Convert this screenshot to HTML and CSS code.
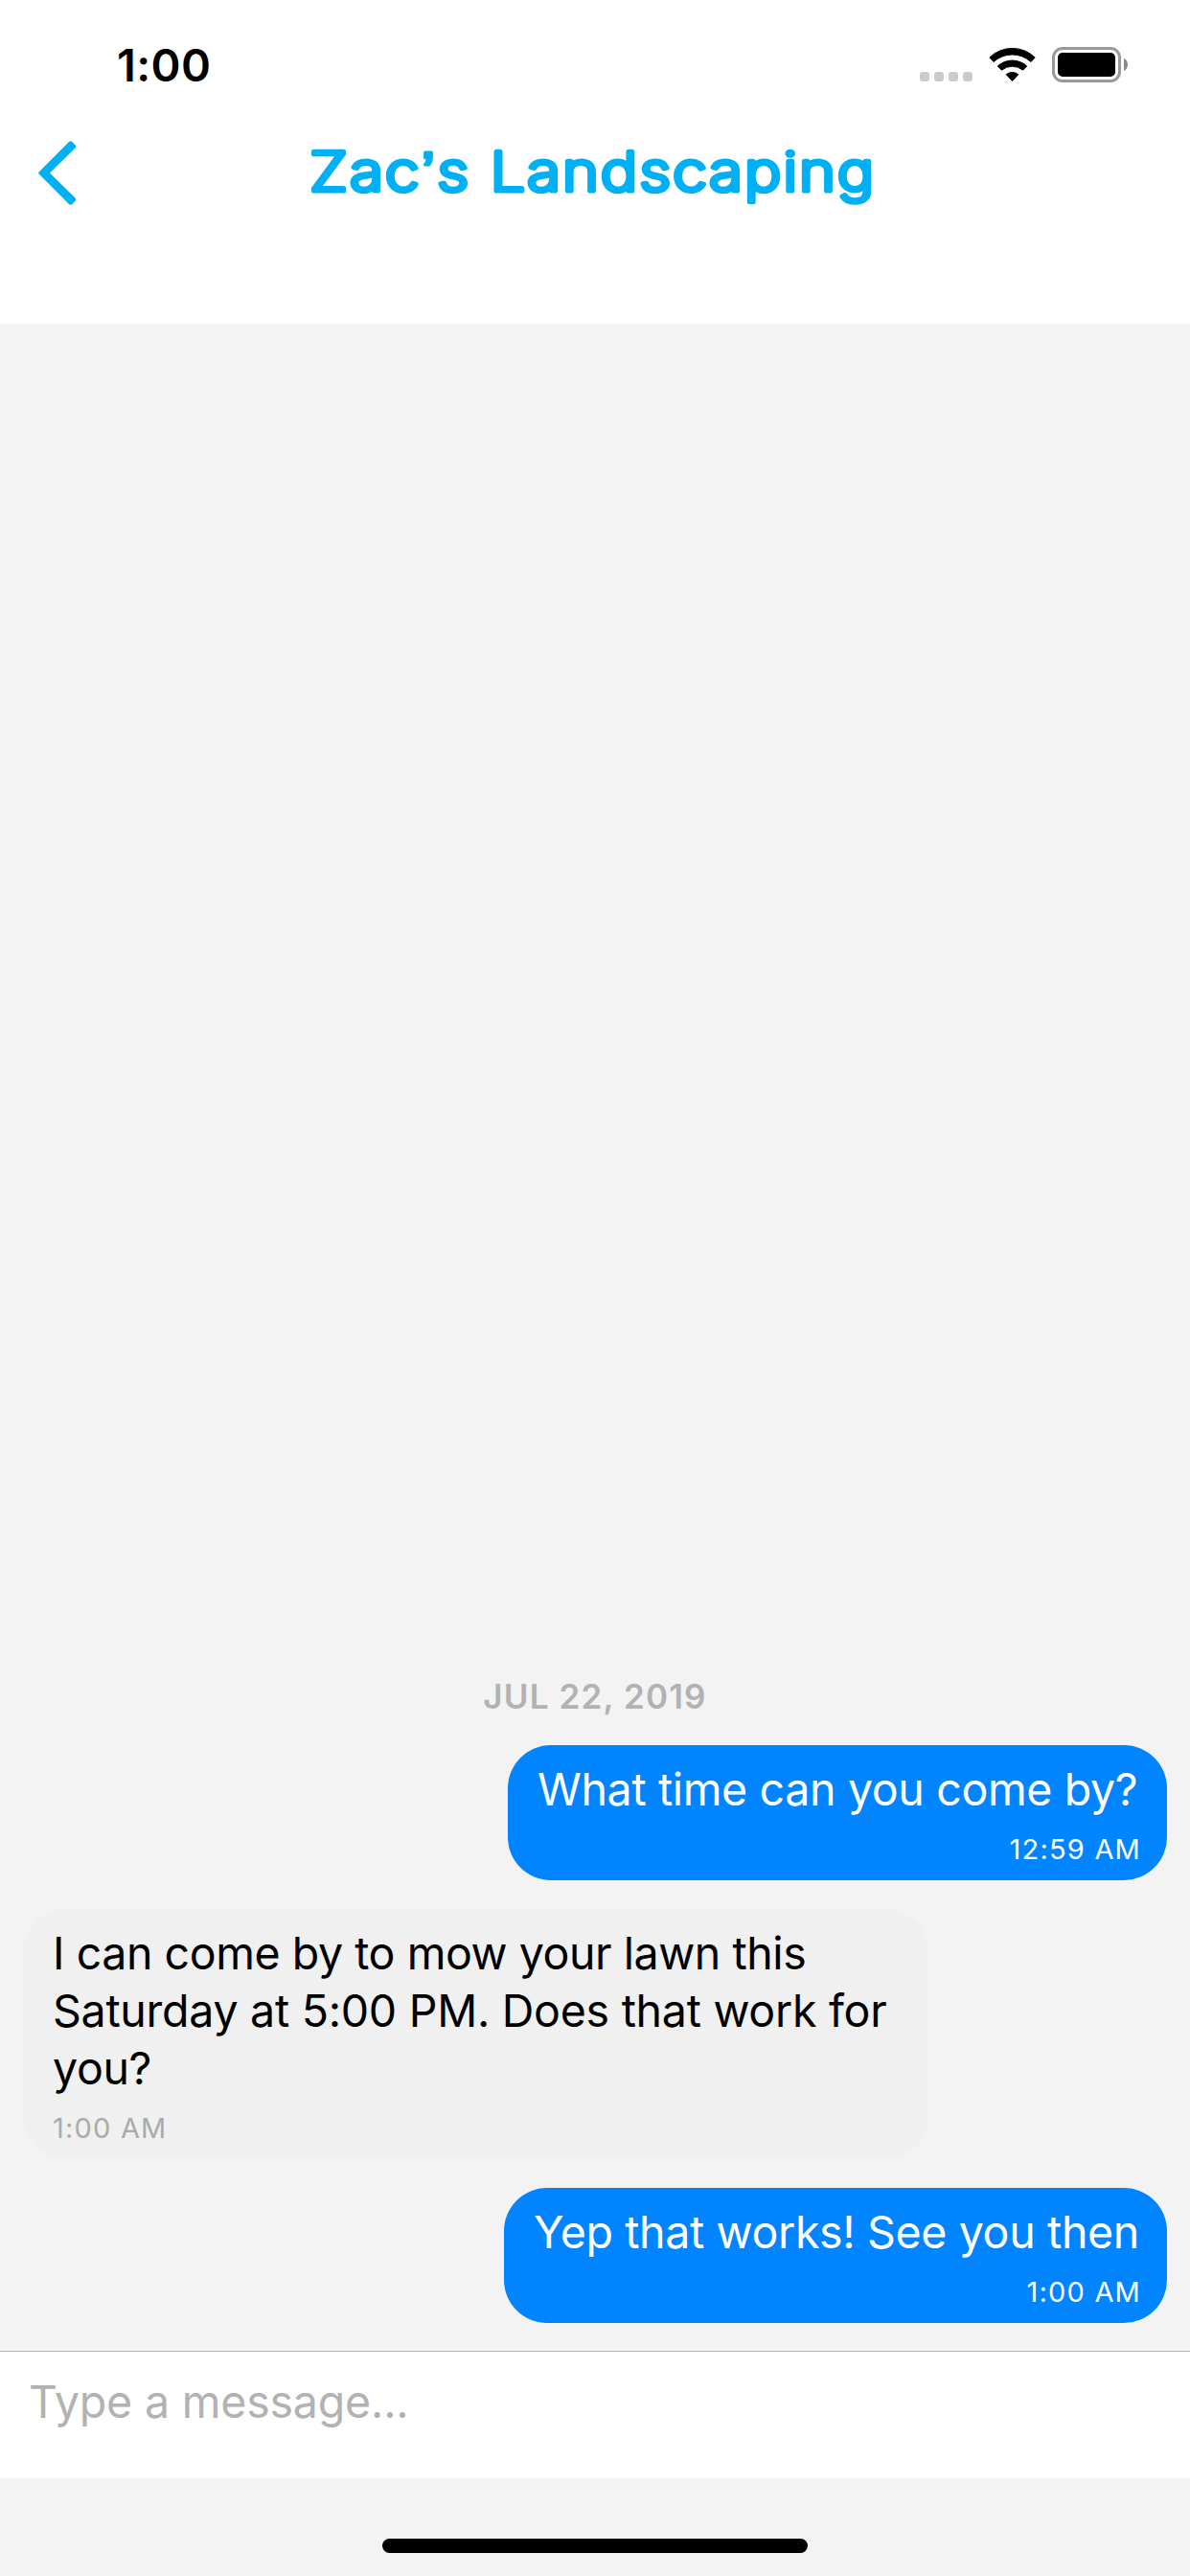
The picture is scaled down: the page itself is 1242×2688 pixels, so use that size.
FILE: index.html
```html
<!DOCTYPE html>
<html lang="en">
<head>
<meta charset="utf-8">
<title>Zac’s Landscaping</title>
<link rel="stylesheet" href="styles.css">
</head>
<body>
<div class="screen">
  <header class="header">
    <div class="status">
      <span class="clock">1:00</span>
      <svg class="status-icons" width="220" height="40" viewBox="958 47 220 40" aria-hidden="true">
        <g fill="#cbcbcb">
          <rect x="960" y="75" width="10" height="10" rx="3"/>
          <rect x="975" y="75" width="10" height="10" rx="3"/>
          <rect x="990" y="75" width="10" height="10" rx="3"/>
          <rect x="1005" y="75" width="10" height="10" rx="3"/>
        </g>
        <g stroke="#000" stroke-width="1" stroke-linejoin="round">
          <path d="M1032.8 60A34 34 0 0 1 1080.2 60L1076 64.5A29 29 0 0 0 1037 64.5Z"/>
          <path d="M1041.3 69A22.5 22.5 0 0 1 1071.7 69L1067.6 73.2A17.5 17.5 0 0 0 1045.4 73.2Z"/>
          <path d="M1050.2 77.7A10 10 0 0 1 1062.8 77.7L1056.5 84.4Z"/>
        </g>
        <rect x="1099.5" y="50.5" width="69" height="34" rx="9.5" fill="none" stroke="#999" stroke-width="3"/>
        <rect x="1104" y="55" width="60" height="25" rx="5"/>
        <path d="M1173 60.7C1178.300 63 1178.300 71.700 1173 74Z" fill="#8a8a8a"/>
      </svg>
    </div>
    <div class="nav">
      <svg class="back" width="40" height="68" viewBox="40 147 40 68" aria-label="Back">
        <path fill="#00b0f4" d="M40.600 179.500L72 148.100Q73.700 146.600 75.300 148.100L78.500 151.200Q80 152.900 78.500 154.500L52 180.500L78.500 206.500Q80 208.100 78.500 209.800L75.300 212.900Q73.700 214.400 72 212.900L40.600 181.500Q39.700 180.500 40.600 179.500Z"/>
      </svg>
      <svg class="title" width="640" height="90" viewBox="0 0 640 90" role="heading" aria-level="1">
        <text transform="translate(3.300 56) scale(1.15 1)">Zac<tspan class="mark">’</tspan>s Landscaping</text>
      </svg>
    </div>
  </header>

  <main class="chat">
    <div class="date">JUL 22, 2019</div>
    <div class="bubble sent question">
      <p class="text">What time can you come by?</p>
      <div class="time">12:59 AM</div>
    </div>
    <div class="bubble received">
      <p class="text"><span class="tight">I can come by to mow your lawn this</span> <span class="loose">Saturday at 5:00 PM. Does that work for</span> you?</p>
      <div class="time">1:00 AM</div>
    </div>
    <div class="bubble sent answer">
      <p class="text">Yep that works! See you then</p>
      <div class="time">1:00 AM</div>
    </div>
  </main>

  <div class="composer">Type a message...</div>
  <footer class="home"><div class="home-bar"></div></footer>
</div>
</body>
</html>
```
FILE: styles.css
```css
* { box-sizing: border-box; }

body {
  margin: 0;
  background: #f3f3f3;
  color: #000;
  font-family: Inter, "Liberation Sans", sans-serif;
}

.screen {
  display: flex;
  flex-direction: column;
  width: 1242px;
  height: 2688px;
  overflow: hidden;
}

.header {
  flex: none;
  height: 338px;
  background: #fff;
}

.status {
  display: flex;
  justify-content: space-between;
  align-items: flex-start;
  height: 143px;
  padding: 38px 64px 0 122px;
}

.clock {
  font-size: 47px;
  font-weight: 600;
  line-height: 60px;
  letter-spacing: 0.38px;
}

.status-icons { margin-top: 9px; }

.nav {
  display: flex;
  align-items: flex-start;
  padding-left: 40px;
}

.back { margin-top: 4px; }

.title { margin-left: 240px; }

/* A thin face with a wide round-joined stroke gives rounded letter ends */
.title text {
  font: 200 56px Inter, sans-serif;
  letter-spacing: 1.95px;
  text-rendering: geometricPrecision;
  fill: #00b0f4;
  stroke: #00b0f4;
  stroke-width: 5.2px;
  stroke-linejoin: round;
}

.title .mark {
  font: 400 58px "Liberation Sans", sans-serif;
  stroke-width: 3px;
}

.chat {
  flex: 1;
  display: flex;
  flex-direction: column;
  justify-content: flex-end;
  gap: 30px;
  padding: 0 24px 29px;
}

.date {
  color: #b2b2b2;
  font-size: 35px;
  font-weight: 600;
  line-height: 42px;
  letter-spacing: 1.14px;
  text-align: center;
}

.bubble {
  padding: 16px 27px 14px 31px;
  border-radius: 45px;
}

.text {
  margin: 0;
  font-size: 46.5px;
  line-height: 60px;
  letter-spacing: -0.35px;
  white-space: nowrap;
}

.time {
  margin-top: 15px;
  font-size: 29px;
  line-height: 36px;
  letter-spacing: 1.2px;
}

.sent {
  align-self: flex-end;
  background: #0084ff;
  color: #fff;
}

.sent .time { text-align: right; }

.question { width: 688px; }

.answer { width: 692px; }

.received {
  align-self: flex-start;
  width: 945px;
  background: #f0f0f0;
}

.received .text { white-space: normal; }

.received .time { color: #aaa; }

.tight { letter-spacing: -0.44px; }

.loose { letter-spacing: -0.27px; }

.composer {
  flex: none;
  height: 133px;
  padding: 22px 30px 0;
  border-top: 1px solid #b2b2b2;
  background: #fff;
  color: #b2b2b2;
  font-size: 46.5px;
  line-height: 60px;
  letter-spacing: -0.2px;
}

.home {
  flex: none;
  display: flex;
  justify-content: center;
  height: 102px;
  padding-top: 63px;
}

.home-bar {
  width: 444px;
  height: 15px;
  border-radius: 8px;
  background: #000;
}
```
